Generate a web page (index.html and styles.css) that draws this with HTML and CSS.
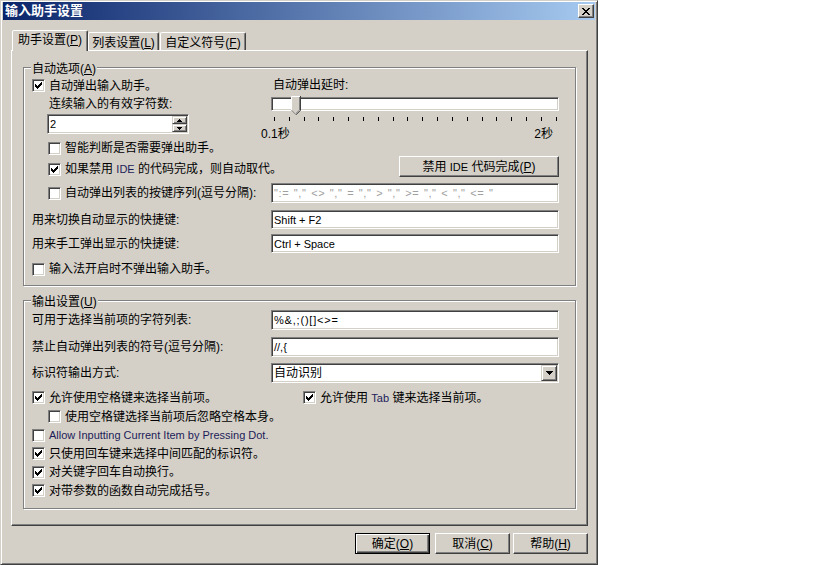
FILE: index.html
```html
<!DOCTYPE html>
<html lang="zh-CN">
<head>
  <meta charset="UTF-8">
  <meta name="viewport" content="width=device-width, initial-scale=1.0">
  <title>输入助手设置</title>
  <link rel="stylesheet" href="styles.css">
</head>
<body>
  <div class="window">
    <div class="titlebar">
      <span class="title">输入助手设置</span>
      <span class="close-btn">
        <svg width="8" height="7" viewBox="0 0 8 7" shape-rendering="crispEdges"><path d="M0 0h2v1H0zM6 0h2v1H6zM1 1h2v1H1zM5 1h2v1H5zM2 2h4v1H2zM3 3h2v1H3zM2 4h4v1H2zM1 5h2v1H1zM5 5h2v1H5zM0 6h2v1H0zM6 6h2v1H6z"/></svg>
      </span>
    </div>

    <div class="dlg-body">
      <div class="tabs">
        <div class="tab tab-1 active">助手设置(<u>P</u>)</div>
        <div class="tab tab-2">列表设置(<u>L</u>)</div>
        <div class="tab tab-3">自定义符号(<u>F</u>)</div>
      </div>

      <div class="panel">
        <!-- 自动选项 -->
        <div class="group group-auto">
          <div class="legend">自动选项(<u>A</u>)</div>

          <div class="split">
            <div class="col-left">
              <label class="check first-opt">
                <span class="cb"><svg width="9" height="9" viewBox="0 0 9 9" shape-rendering="crispEdges"><path d="M1 3h1v3H1zM2 4h1v3H2zM3 5h1v3H3zM4 4h1v3H4zM5 3h1v3H5zM6 2h1v3H6zM7 1h1v3H7z"/></svg></span>
                自动弹出输入助手。
              </label>
              <div class="sub-label">连续输入的有效字符数:</div>
              <div class="spin">
                <span class="spin-text en">2</span>
                <span class="spin-btns">
                  <span class="spin-btn"><svg width="5" height="3" viewBox="0 0 5 3" shape-rendering="crispEdges"><path d="M2 0h1v1H2zM1 1h3v1H1zM0 2h5v1H0z"/></svg></span>
                  <span class="spin-btn"><svg width="5" height="3" viewBox="0 0 5 3" shape-rendering="crispEdges"><path d="M0 0h5v1H0zM1 1h3v1H1zM2 2h1v1H2z"/></svg></span>
                </span>
              </div>
              <label class="check sub-opt mt5">
                <span class="cb"></span>
                智能判断是否需要弹出助手。
              </label>
              <label class="check sub-opt mt3">
                <span class="cb"><svg width="9" height="9" viewBox="0 0 9 9" shape-rendering="crispEdges"><path d="M1 3h1v3H1zM2 4h1v3H2zM3 5h1v3H3zM4 4h1v3H4zM5 3h1v3H5zM6 2h1v3H6zM7 1h1v3H7z"/></svg></span>
                如果禁用&nbsp;<span class="en">IDE</span>&nbsp;的代码完成，则自动取代。
              </label>
            </div>

            <div class="col-right">
              <div class="delay-label">自动弹出延时:</div>
              <div class="slider">
                <div class="track"></div>
                <svg class="thumb" width="10" height="19" viewBox="0 0 10 19">
                  <path d="M0 0H10V14L5 19L0 14Z" fill="#d4d0c8"/>
                  <path d="M0.5 14.5V0.5H9" fill="none" stroke="#fff"/>
                  <path d="M0.5 14.2L4.8 18.5" fill="none" stroke="#808080"/>
                  <path d="M9.5 0V14.3L5 18.8" fill="none" stroke="#404040"/>
                  <path d="M8.5 1V14L5 17.4" fill="none" stroke="#808080"/>
                </svg>
              </div>
              <div class="ticks">
                <i></i><i></i><i></i><i></i><i></i><i></i><i></i><i></i><i></i><i></i>
                <i></i><i></i><i></i><i></i><i></i><i></i><i></i><i></i><i></i><i></i>
              </div>
              <div class="scale"><span>0.1秒</span><span>2秒</span></div>
              <div class="btn btn-ide">禁用&nbsp;<span class="en">IDE</span>&nbsp;代码完成(<u>P</u>)</div>
            </div>
          </div>

          <div class="field mt5">
            <label class="check sub-opt">
              <span class="cb"></span>
              自动弹出列表的按键序列(逗号分隔):
            </label>
            <div class="edit edit-20 dim">":= "," &lt;&gt; "," = "," &gt; "," &gt;= "," &lt; "," &lt;= "</div>
          </div>
          <div class="field mt7">
            <span>用来切换自动显示的快捷键:</span>
            <div class="edit">Shift + F2</div>
          </div>
          <div class="field mt5">
            <span>用来手工弹出显示的快捷键:</span>
            <div class="edit">Ctrl + Space</div>
          </div>
          <label class="check last-opt mt8">
            <span class="cb"></span>
            输入法开启时不弹出输入助手。
          </label>
        </div>

        <!-- 输出设置 -->
        <div class="group group-out">
          <div class="legend">输出设置(<u>U</u>)</div>

          <div class="field">
            <span>可用于选择当前项的字符列表:</span>
            <div class="edit edit-20 wide-chars">%&amp;,;()[]&lt;&gt;=</div>
          </div>
          <div class="field mt7">
            <span>禁止自动弹出列表的符号(逗号分隔):</span>
            <div class="edit edit-20">//,{</div>
          </div>
          <div class="field mt6">
            <span>标识符输出方式:</span>
            <div class="combo">
              <span class="combo-text">自动识别</span>
              <span class="combo-btn"><svg width="7" height="4" viewBox="0 0 7 4" shape-rendering="crispEdges"><path d="M0 0h7v1H0zM1 1h5v1H1zM2 2h3v1H2zM3 3h1v1H3z"/></svg></span>
            </div>
          </div>

          <div class="field opt mt5">
            <label class="check">
              <span class="cb"><svg width="9" height="9" viewBox="0 0 9 9" shape-rendering="crispEdges"><path d="M1 3h1v3H1zM2 4h1v3H2zM3 5h1v3H3zM4 4h1v3H4zM5 3h1v3H5zM6 2h1v3H6zM7 1h1v3H7z"/></svg></span>
              允许使用空格键来选择当前项。
            </label>
            <label class="check tab-opt">
              <span class="cb"><svg width="9" height="9" viewBox="0 0 9 9" shape-rendering="crispEdges"><path d="M1 3h1v3H1zM2 4h1v3H2zM3 5h1v3H3zM4 4h1v3H4zM5 3h1v3H5zM6 2h1v3H6zM7 1h1v3H7z"/></svg></span>
              允许使用&nbsp;<span class="en">Tab</span>&nbsp;键来选择当前项。
            </label>
          </div>
          <label class="check opt sub">
            <span class="cb"></span>
            使用空格键选择当前项后忽略空格本身。
          </label>
          <label class="check opt short">
            <span class="cb"></span>
            <span class="en">Allow Inputting Current Item by Pressing Dot.</span>
          </label>
          <label class="check opt">
            <span class="cb"><svg width="9" height="9" viewBox="0 0 9 9" shape-rendering="crispEdges"><path d="M1 3h1v3H1zM2 4h1v3H2zM3 5h1v3H3zM4 4h1v3H4zM5 3h1v3H5zM6 2h1v3H6zM7 1h1v3H7z"/></svg></span>
            只使用回车键来选择中间匹配的标识符。
          </label>
          <label class="check opt short">
            <span class="cb"><svg width="9" height="9" viewBox="0 0 9 9" shape-rendering="crispEdges"><path d="M1 3h1v3H1zM2 4h1v3H2zM3 5h1v3H3zM4 4h1v3H4zM5 3h1v3H5zM6 2h1v3H6zM7 1h1v3H7z"/></svg></span>
            对关键字回车自动换行。
          </label>
          <label class="check opt">
            <span class="cb"><svg width="9" height="9" viewBox="0 0 9 9" shape-rendering="crispEdges"><path d="M1 3h1v3H1zM2 4h1v3H2zM3 5h1v3H3zM4 4h1v3H4zM5 3h1v3H5zM6 2h1v3H6zM7 1h1v3H7z"/></svg></span>
            对带参数的函数自动完成括号。
          </label>
        </div>
      </div>

      <div class="buttons">
        <div class="btn default">确定(<u>O</u>)</div>
        <div class="btn btn-cancel">取消(<u>C</u>)</div>
        <div class="btn btn-help">帮助(<u>H</u>)</div>
      </div>
    </div>
  </div>
</body>
</html>
```

FILE: styles.css
```css
* {
  box-sizing: border-box;
}

body {
  margin: 0;
  background: #fff;
  font-family: "Liberation Sans", "Noto Sans CJK SC", sans-serif;
  font-size: 12px;
  line-height: 14px;
  color: #000;
}

.en {
  font-size: 11px;
}

label .en {
  color: #1c1c58;
}

/* window frame */
.window {
  width: 598px;
  height: 565px;
  padding: 1px 2px 2px 2px;
  background: #d4d0c8;
  border: 1px solid;
  border-color: #d4d0c8 #404040 #404040 #d4d0c8;
  box-shadow: inset 1px 1px #fff, inset -1px -1px #808080;
}

.titlebar {
  height: 18px;
  display: flex;
  align-items: center;
  justify-content: space-between;
  padding: 0 1px 0 2px;
  background: linear-gradient(to right, #0a246a, #a6caf0);
}

.title {
  color: #fff;
  font-weight: bold;
  font-size: 13px;
}

.close-btn {
  width: 16px;
  height: 14px;
  display: flex;
  align-items: center;
  justify-content: center;
  background: #d4d0c8;
  border: 1px solid;
  border-color: #fff #404040 #404040 #fff;
  box-shadow: inset -1px -1px #808080;
}

.close-btn svg {
  display: block;
}

.dlg-body {
  padding: 10px 0 0 8px;
}

/* tabs */
.tabs {
  display: flex;
  align-items: flex-end;
  height: 20px;
  padding-left: 1px;
  position: relative;
  z-index: 1;
}

.tab {
  height: 18px;
  display: flex;
  justify-content: center;
  padding-top: 3px;
  background: #d4d0c8;
  border: 1px solid;
  border-bottom: none;
  border-color: #fff #404040 transparent #fff;
  border-radius: 2px 2px 0 0;
  box-shadow: inset -1px 0 #808080;
}

.tab.active {
  height: 21px;
  margin-bottom: -1px;
  padding-top: 2px;
}

.tab-1 { width: 76px; }
.tab-2 { width: 71px; }
.tab-3 { width: 86px; margin-left: 1px; }

.panel {
  width: 577px;
  height: 476px;
  padding: 16px 0 0 11px;
  border: 1px solid;
  border-color: #fff #404040 #404040 #fff;
  box-shadow: inset -1px -1px #808080;
}

/* group boxes */
.group {
  position: relative;
  width: 553px;
  padding: 9px 16px 0 8px;
  border: 1px solid #808080;
  box-shadow: inset 1px 1px #fff, 1px 1px #fff;
}

.group-auto {
  height: 219px;
}

.group-out {
  height: 209px;
  margin-top: 14px;
}

.legend {
  position: absolute;
  top: -6px;
  left: 7px;
  padding: 0 1px;
  background: #d4d0c8;
}

.split {
  display: flex;
}

.col-left {
  width: 239px;
}

.col-right {
  width: 288px;
  display: flex;
  flex-direction: column;
}

.check {
  display: flex;
  align-items: center;
  white-space: nowrap;
}

.cb {
  flex: none;
  width: 13px;
  height: 13px;
  padding: 1px;
  margin-right: 4px;
  background: #fff;
  border: 1px solid;
  border-color: #808080 #fff #fff #808080;
  box-shadow: inset 1px 1px #404040, inset -1px -1px #d4d0c8;
}

.cb svg {
  display: block;
}

.first-opt { height: 17px; }
.sub-opt { height: 18px; padding-left: 16px; }
.last-opt { height: 16px; }

.sub-label {
  height: 19px;
  padding-left: 17px;
  display: flex;
  align-items: center;
}

.mt3 { margin-top: 3px; }
.mt5 { margin-top: 5px; }
.mt6 { margin-top: 6px; }
.mt7 { margin-top: 7px; }
.mt8 { margin-top: 8px; }

/* edit boxes */
.edit,
.spin,
.combo {
  height: 19px;
  display: flex;
  align-items: center;
  padding: 1px;
  background: #fff;
  border: 1px solid;
  border-color: #808080 #fff #fff #808080;
  box-shadow: inset 1px 1px #404040, inset -1px -1px #d4d0c8;
  white-space: nowrap;
  overflow: hidden;
}

.edit {
  padding-left: 2px;
  font-size: 11px;
}

.edit-20 {
  height: 20px;
}

.edit.dim {
  color: #a0a0a0;
  letter-spacing: 0.6px;
  word-spacing: 1px;
}

.edit.wide-chars {
  letter-spacing: 0.8px;
}

.spin {
  width: 142px;
  height: 20px;
  margin: 1px 0 0 15px;
}

.spin-text {
  flex: 1;
  padding-left: 1px;
}

.spin-btns {
  width: 15px;
  height: 16px;
  display: flex;
  flex-direction: column;
}

.spin-btn,
.combo-btn {
  display: flex;
  align-items: center;
  justify-content: center;
  background: #d4d0c8;
  border: 1px solid;
  border-color: #d4d0c8 #404040 #404040 #d4d0c8;
  box-shadow: inset 1px 1px #fff, inset -1px -1px #808080;
}

.spin-btn {
  height: 8px;
}

.spin-btn svg,
.combo-btn svg {
  display: block;
}

.combo {
  height: 20px;
}

.combo-text {
  flex: 1;
  padding-left: 1px;
}

.combo-btn {
  width: 16px;
  height: 16px;
}

/* slider */
.delay-label {
  height: 16px;
  padding-left: 2px;
  display: flex;
  align-items: center;
}

.slider {
  position: relative;
  height: 17px;
  margin-top: 4px;
}

.track {
  height: 14px;
  background: #fff;
  border: 1px solid;
  border-color: #808080 #fff #fff #808080;
  box-shadow: inset 1px 1px #404040, inset -1px -1px #d4d0c8;
}

.thumb {
  position: absolute;
  left: 20px;
  top: -1px;
}

.ticks {
  width: 283px;
  height: 4px;
  margin: 3px 0 0 3px;
  display: flex;
  justify-content: space-between;
}

.ticks i {
  width: 1px;
  background: #000;
}

.scale {
  height: 14px;
  margin: 6px 6px 0 -10px;
  display: flex;
  justify-content: space-between;
}

/* rows with a label and a field */
.field {
  display: grid;
  grid-template-columns: 239px 288px;
  align-items: center;
}

.opt {
  height: 19px;
}

.opt.short {
  height: 18px;
}

.opt.sub {
  padding-left: 16px;
}

.tab-opt {
  padding-left: 32px;
}

/* buttons */
.btn {
  height: 21px;
  display: flex;
  align-items: center;
  justify-content: center;
  background: #d4d0c8;
  border: 1px solid;
  border-color: #fff #404040 #404040 #fff;
  box-shadow: inset -1px -1px #808080;
  white-space: nowrap;
}

.btn-ide {
  width: 160px;
  margin-top: 15px;
  align-self: flex-end;
}

.buttons {
  width: 577px;
  margin-top: 7px;
  display: flex;
  justify-content: flex-end;
}

.buttons .btn {
  width: 75px;
}

.btn.default {
  border-color: #000;
  box-shadow: inset 1px 1px #fff, inset -1px -1px #404040, inset -2px -2px #808080;
}

.btn-cancel { margin-left: 5px; }
.btn-help { margin-left: 3px; }
```
